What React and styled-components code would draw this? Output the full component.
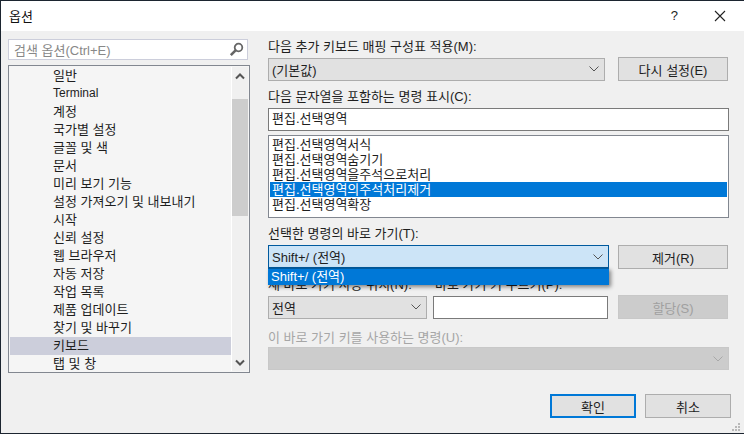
import styled, { createGlobalStyle } from 'styled-components';

const GlobalStyle = createGlobalStyle`
  html, body {
    margin: 0;
    background: #1c2530;
  }
  * {
    box-sizing: border-box;
  }
`;

const treeItems = [
  '일반',
  'Terminal',
  '계정',
  '국가별 설정',
  '글꼴 및 색',
  '문서',
  '미리 보기 기능',
  '설정 가져오기 및 내보내기',
  '시작',
  '신뢰 설정',
  '웹 브라우저',
  '자동 저장',
  '작업 목록',
  '제품 업데이트',
  '찾기 및 바꾸기',
  '키보드',
  '탭 및 창',
];

const commands = [
  '편집.선택영역서식',
  '편집.선택영역숨기기',
  '편집.선택영역을주석으로처리',
  '편집.선택영역의주석처리제거',
  '편집.선택영역확장',
];

const Chevron = ({ color = '#555', width = 1 }) => (
  <svg width="12" height="8" viewBox="0 0 12 8" fill="none">
    <path d="M1.5 1.5L6 6L10.5 1.5" stroke={color} strokeWidth={width} />
  </svg>
);

const Combo = ({ value, width, $active, $disabled }) => (
  <ComboBox $width={width} $active={$active} $disabled={$disabled}>
    <span>{value}</span>
    <Chevron color={$disabled ? '#a8a8a8' : '#555'} />
  </ComboBox>
);

const App = () => {
  return (
    <>
      <GlobalStyle />
      <Window>
        <TitleBar>
          <Title>옵션</Title>
          <HelpMark>?</HelpMark>
          <svg width="12" height="12" viewBox="0 0 12 12" fill="none">
            <path d="M1 1L11 11M11 1L1 11" stroke="#222" strokeWidth="1.1" />
          </svg>
        </TitleBar>
        <Body>
          <LeftColumn>
            <SearchBox>
              <span>검색 옵션(Ctrl+E)</span>
              <svg width="15" height="15" viewBox="0 0 15 15" fill="none">
                <circle cx="9.5" cy="5.5" r="3.8" stroke="#666" strokeWidth="1.8" />
                <path d="M6.8 8.2L1.8 13.2" stroke="#666" strokeWidth="2.6" />
              </svg>
            </SearchBox>
            <Tree>
              <TreeList>
                {treeItems.map((item) => (
                  <TreeItem key={item} $selected={item === '키보드'} $latin={item === 'Terminal'}>
                    {item}
                  </TreeItem>
                ))}
              </TreeList>
              <ScrollBar>
                <ScrollButton $tall>
                  <svg width="10" height="7" viewBox="0 0 10 7" fill="none">
                    <path d="M1 5.5L5 1.5L9 5.5" stroke="#555" strokeWidth="2" />
                  </svg>
                </ScrollButton>
                <ScrollThumb />
                <ScrollButton>
                  <svg width="10" height="7" viewBox="0 0 10 7" fill="none">
                    <path d="M1 1.5L5 5.5L9 1.5" stroke="#555" strokeWidth="2" />
                  </svg>
                </ScrollButton>
              </ScrollBar>
            </Tree>
          </LeftColumn>

          <RightColumn>
            <Label>다음 추가 키보드 매핑 구성표 적용(M):</Label>
            <Row>
              <Combo value="(기본값)" width="337px" />
              <ActionButton>다시 설정(E)</ActionButton>
            </Row>

            <Label $top="7px">다음 문자열을 포함하는 명령 표시(C):</Label>
            <TextInput $top="2px" $width="461px">
              편집.선택영역
            </TextInput>

            <CommandList>
              {commands.map((command, index) => (
                <CommandItem key={command} $selected={index === 3}>
                  {command}
                </CommandItem>
              ))}
            </CommandList>

            <Label $top="7px">선택한 명령의 바로 가기(T):</Label>
            <ShortcutRow>
              <Combo value="Shift+/ (전역)" width="341px" $active />
              <ActionButton $narrow>제거(R)</ActionButton>
              <Dropdown>Shift+/ (전역)</Dropdown>
            </ShortcutRow>

            <LabelRow>
              <Label $width="167px">새 바로 가기 사용 위치(N):</Label>
              <Label>바로 가기 키 누르기(P):</Label>
            </LabelRow>
            <Row>
              <Combo value="전역" width="159px" />
              <TextInput $left="6px" $width="175px" />
              <ActionButton $disabled $left="10px">
                할당(S)
              </ActionButton>
            </Row>

            <Label $top="10px" $disabled>
              이 바로 가기 키를 사용하는 명령(U):
            </Label>
            <Combo value="" width="461px" $disabled />
          </RightColumn>
        </Body>
        <Footer>
          <DialogButton $primary>확인</DialogButton>
          <DialogButton>취소</DialogButton>
          <Grip>
            <svg width="10" height="10" viewBox="0 0 10 10" fill="#b8b8b8">
              <rect x="7" y="1" width="2" height="2" />
              <rect x="4" y="4" width="2" height="2" />
              <rect x="7" y="4" width="2" height="2" />
              <rect x="1" y="7" width="2" height="2" />
              <rect x="4" y="7" width="2" height="2" />
              <rect x="7" y="7" width="2" height="2" />
            </svg>
          </Grip>
        </Footer>
      </Window>
    </>
  );
};

export default App;

const Window = styled.main`
  position: relative;
  display: flex;
  flex-direction: column;
  width: 744px;
  height: 432px;
  margin-top: 1px;
  margin-left: 1px;
  background: #f0f0f0;
  color: #1e1e1e;
  font-family: 'Liberation Sans', 'Noto Sans CJK KR', sans-serif;
  font-size: 13px;
  overflow: hidden;
`;

const TitleBar = styled.header`
  display: flex;
  align-items: center;
  flex: none;
  height: 30px;
  padding: 0 19px 1px 8px;
  background: #fff;
`;

const Title = styled.h1`
  flex: 1;
  margin: 0;
  font-size: 13px;
  font-weight: 400;
  color: #111;
`;

const HelpMark = styled.span`
  margin-right: 36px;
  font-size: 13px;
  color: #222;
`;

const Body = styled.div`
  display: flex;
  flex: none;
  height: 363px;
`;

const LeftColumn = styled.section`
  display: flex;
  flex-direction: column;
  flex: none;
  width: 267px;
  padding: 8px 0 0 7px;
`;

const SearchBox = styled.div`
  display: flex;
  align-items: center;
  justify-content: space-between;
  width: 240px;
  height: 21px;
  padding: 0 3px 0 5px;
  background: #fff;
  border: 1px solid #cccedb;
  color: #888;
  white-space: nowrap;
`;

const Tree = styled.div`
  display: flex;
  width: 242px;
  height: 308px;
  margin-top: 5px;
  padding: 1px;
  background: #f5f5f5;
  border: 1px solid #828790;
  overflow: hidden;
`;

const TreeList = styled.ul`
  flex: 1;
  margin: 0;
  padding: 0;
  list-style: none;
  overflow: hidden;
`;

const TreeItem = styled.li`
  height: 18px;
  padding-left: 43px;
  font-size: ${({ $latin }) => ($latin ? '12px' : '13px')};
  line-height: 17px;
  white-space: nowrap;
  background: ${({ $selected }) => ($selected ? '#cccedb' : 'transparent')};
`;

const ScrollBar = styled.div`
  display: flex;
  flex-direction: column;
  flex: none;
  width: 17px;
  background: #f0f0f0;
  border-left: 1px solid #fff;
`;

const ScrollButton = styled.div`
  display: flex;
  align-items: center;
  justify-content: center;
  flex: none;
  height: ${({ $tall }) => ($tall ? '19px' : '17px')};
`;

const ScrollThumb = styled.div`
  flex: none;
  height: 117px;
  margin-top: 13px;
  margin-bottom: auto;
  background: #cdcdcd;
`;

const RightColumn = styled.section`
  display: flex;
  flex-direction: column;
  flex: none;
  width: 461px;
  padding-top: 7px;
`;

const Label = styled.label`
  display: block;
  flex: none;
  height: 18px;
  width: ${({ $width }) => $width || 'auto'};
  margin-top: ${({ $top }) => $top || 0};
  line-height: 18px;
  white-space: nowrap;
  color: ${({ $disabled }) => ($disabled ? '#a6a6a6' : '#1e1e1e')};
`;

const Row = styled.div`
  display: flex;
  align-items: center;
  flex: none;
  height: 24px;
  margin-top: 1px;
`;

const ShortcutRow = styled(Row)`
  position: relative;
  align-items: flex-start;
  margin-top: 2px;
`;

const LabelRow = styled.div`
  display: flex;
  flex: none;
  margin-top: 7px;
`;

const ComboBox = styled.div`
  display: flex;
  align-items: center;
  justify-content: space-between;
  flex: none;
  width: ${({ $width }) => $width};
  height: 23px;
  padding: 0 4px 0 3px;
  white-space: nowrap;
  border: 1px solid ${({ $active, $disabled }) => ($active ? '#005a9e' : $disabled ? '#c8c8c8' : '#adadad')};
  background: ${({ $active, $disabled }) => ($active ? '#cce4f7' : $disabled ? '#cccccc' : '#e1e1e1')};
`;

const ActionButton = styled.button`
  flex: none;
  width: 110px;
  height: 24px;
  margin-left: ${({ $left, $narrow }) => $left || ($narrow ? '9px' : '13px')};
  padding: 0;
  font: inherit;
  color: ${({ $disabled }) => ($disabled ? '#a0a0a0' : '#1e1e1e')};
  background: ${({ $disabled }) => ($disabled ? '#cccccc' : '#e1e1e1')};
  border: 1px solid ${({ $disabled }) => ($disabled ? '#c8c8c8' : '#adadad')};
`;

const TextInput = styled.div`
  flex: none;
  width: ${({ $width }) => $width};
  height: 23px;
  margin-top: ${({ $top }) => $top || 0};
  margin-left: ${({ $left }) => $left || 0};
  padding-left: 3px;
  line-height: 20px;
  background: #fff;
  border: 1px solid #7a7a7a;
`;

const CommandList = styled.ul`
  flex: none;
  height: 83px;
  margin: 4px 0 0;
  padding: 1px;
  list-style: none;
  background: #fff;
  border: 1px solid #828790;
`;

const CommandItem = styled.li`
  height: 15px;
  padding-left: 2px;
  line-height: 15px;
  white-space: nowrap;
  color: ${({ $selected }) => ($selected ? '#fff' : '#1e1e1e')};
  background: ${({ $selected }) => ($selected ? '#0078d7' : 'transparent')};
`;

const Dropdown = styled.div`
  position: absolute;
  top: 23px;
  left: 0;
  width: 341px;
  height: 17px;
  padding-left: 3px;
  line-height: 16px;
  color: #fff;
  background: #0078d7;
  border-top: 1px solid #005a9e;
  box-shadow: 2px 2px 4px rgba(0, 0, 0, 0.45);
`;

const Footer = styled.footer`
  position: relative;
  display: flex;
  justify-content: flex-end;
  gap: 9px;
  padding: 0 14px;
`;

const DialogButton = styled.button`
  width: 86px;
  height: 24px;
  padding: 0;
  font: inherit;
  color: #1e1e1e;
  background: #e1e1e1;
  border: ${({ $primary }) => ($primary ? '2px solid #0078d7' : '1px solid #adadad')};
`;

const Grip = styled.div`
  position: absolute;
  right: 4px;
  bottom: -14px;
  display: flex;
`;
